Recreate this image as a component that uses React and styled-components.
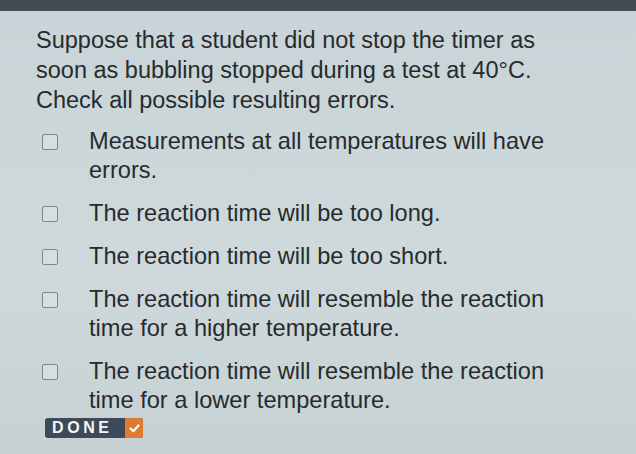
import React from 'react';
import styled, { createGlobalStyle } from 'styled-components';

const GlobalStyle = createGlobalStyle`
  html, body {
    margin: 0;
    padding: 0;
    background: #ccd7da;
  }
  body {
    font-family: 'Liberation Sans', Arial, sans-serif;
  }
`;

const Page = styled.div`
  width: 636px;
  height: 454px;
  overflow: hidden;
  background: linear-gradient(180deg, #c8d4d7 0%, #cfd9dc 60%, #c6d1d4 100%);
  display: flex;
  flex-direction: column;
`;

const TopBar = styled.div`
  height: 11px;
  background: #454b50;
  flex-shrink: 0;
`;

const Content = styled.div`
  padding: 14px 0 0 36px;
  display: flex;
  flex-direction: column;
`;

const Question = styled.p`
  margin: 0;
  width: 524px;
  font-size: 23.5px;
  line-height: 30px;
  color: #272b2d;
`;

const Options = styled.ul`
  list-style: none;
  margin: 12px 0 0 0;
  padding: 0;
  display: flex;
  flex-direction: column;
  gap: 14px;
`;

const Option = styled.li`
  display: flex;
  align-items: flex-start;
`;

const Box = styled.span`
  width: 14px;
  height: 14px;
  margin: 7px 31px 0 6px;
  border: 1.5px solid #80878a;
  border-radius: 2px;
  background: #d5dee1;
  flex-shrink: 0;
`;

const Label = styled.span`
  width: 470px;
  font-size: 23.6px;
  line-height: 29px;
  color: #272b2d;
`;

const Done = styled.button`
  margin: 3px 0 0 9px;
  align-self: flex-start;
  display: flex;
  align-items: stretch;
  height: 20px;
  padding: 0;
  border: none;
  border-radius: 3px;
  overflow: hidden;
  background: #3e4a57;
  cursor: pointer;
`;

const DoneText = styled.span`
  width: 80px;
  padding-left: 7px;
  box-sizing: border-box;
  display: flex;
  align-items: center;
  font-family: 'Liberation Sans', Arial, sans-serif;
  font-weight: bold;
  font-size: 16px;
  letter-spacing: 3.6px;
  color: #f4f6f7;
`;

const DoneCheck = styled.span`
  width: 18px;
  background: #df7a31;
  display: flex;
  align-items: center;
  justify-content: center;
`;

const options = [
  'Measurements at all temperatures will have errors.',
  'The reaction time will be too long.',
  'The reaction time will be too short.',
  'The reaction time will resemble the reaction time for a higher temperature.',
  'The reaction time will resemble the reaction time for a lower temperature.',
];

export default function App() {
  return (
    <Page>
      <GlobalStyle />
      <TopBar />
      <Content>
        <Question>
          Suppose that a student did not stop the timer as soon as bubbling
          stopped during a test at 40°C. Check all possible resulting errors.
        </Question>
        <Options>
          {options.map((text) => (
            <Option key={text}>
              <Box />
              <Label>{text}</Label>
            </Option>
          ))}
        </Options>
        <Done>
          <DoneText>DONE</DoneText>
          <DoneCheck>
            <svg width="11" height="9" viewBox="0 0 11 9">
              <path
                d="M1.5 4.5 L4.3 7.2 L9.5 1.5"
                fill="none"
                stroke="#fff"
                strokeWidth="2.2"
                strokeLinecap="round"
                strokeLinejoin="round"
              />
            </svg>
          </DoneCheck>
        </Done>
      </Content>
    </Page>
  );
}
